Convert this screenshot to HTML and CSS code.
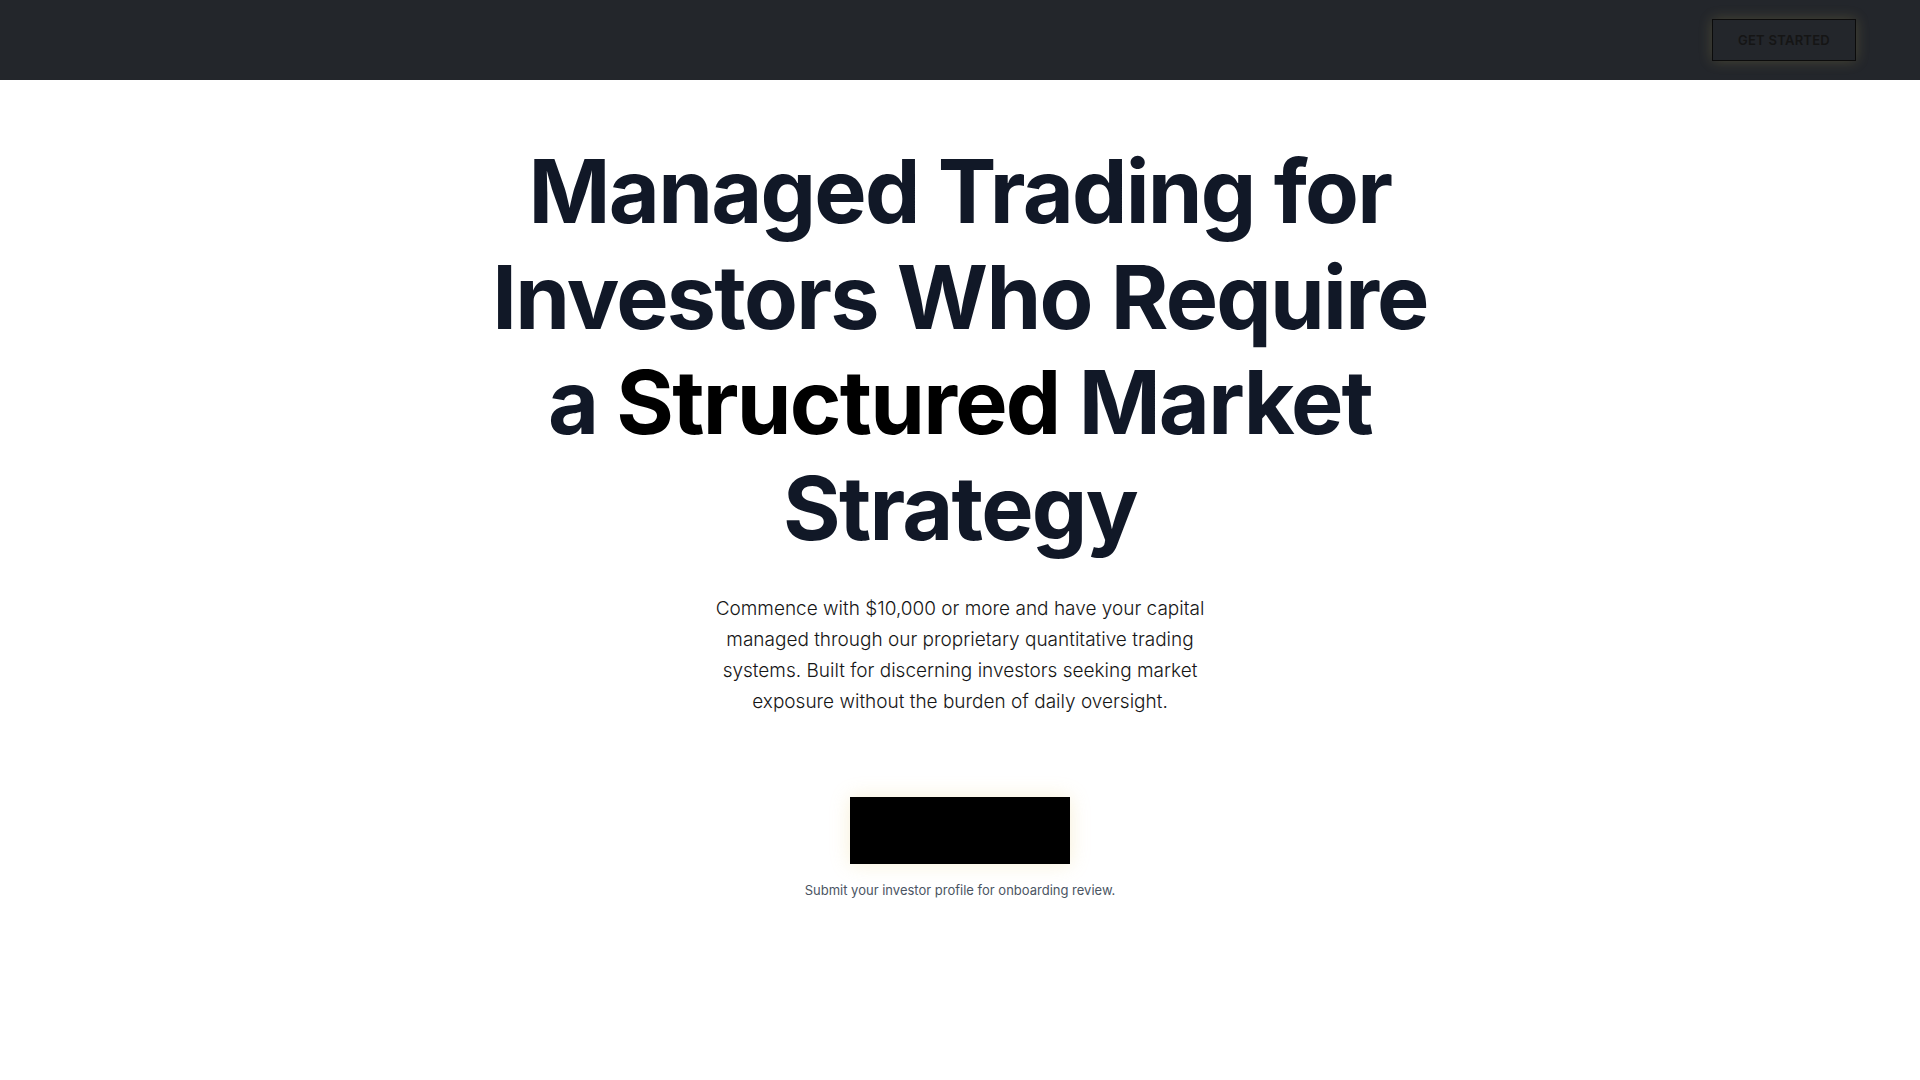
FILE: index.html
```html
<!DOCTYPE html>
<html lang="en">
<head>
<meta charset="utf-8">
<title>Managed Trading</title>
<link rel="stylesheet" href="styles.css">
</head>
<body>
<header class="topbar">
  <div class="topbar-spacer"></div>
  <a class="btn-outline" href="#">GET STARTED</a>
</header>
<main class="hero">
  <h1 class="hero-title">Managed Trading for Investors Who Require a <span class="accent">Structured</span> Market Strategy</h1>
  <p class="hero-lead">Commence with $10,000 or more and have your capital managed through our proprietary quantitative trading systems. Built for discerning investors seeking market exposure without the burden of daily oversight.</p>
  <a class="btn-primary" href="#" aria-label="Apply"></a>
  <p class="hero-note">Submit your investor profile for onboarding review.</p>
</main>
</body>
</html>
```

FILE: styles.css
```css
* { box-sizing: border-box; }
html, body { margin: 0; padding: 0; }
body {
  font-family: Inter, "Noto Sans", "Liberation Sans", sans-serif;
  background: #ffffff;
  color: #111827;
}
.topbar {
  height: 80px;
  background: #23262b;
  display: flex;
  align-items: center;
  justify-content: space-between;
  padding: 0 64px;
}
.btn-outline {
  display: flex;
  align-items: center;
  justify-content: center;
  width: 144px;
  height: 42px;
  margin-top: -1px;
  border: 1px solid #0b0b0b;
  color: #151515;
  font-size: 13px;
  font-weight: 600;
  letter-spacing: 0.02em;
  text-decoration: none;
  box-shadow: 0 0 14px rgba(214, 190, 90, 0.22);
}
.hero {
  display: flex;
  flex-direction: column;
  align-items: center;
  text-align: center;
  padding-top: 59px;
}
.hero-title {
  margin: 0;
  max-width: 960px;
  font-size: 88px;
  line-height: 105.6px;
  font-weight: 700;
  letter-spacing: -0.02em;
  color: #111827;
}
.accent { color: #000000; }
.hero-lead {
  margin: 32px 0 0;
  max-width: 512px;
  font-size: 19px;
  line-height: 31px;
  font-weight: 300;
  color: #161616;
}
.btn-primary {
  display: block;
  margin-top: 80px;
  width: 220px;
  height: 67px;
  background: #000000;
  box-shadow: 0 0 18px rgba(230, 200, 110, 0.28);
}
.hero-note {
  margin: 16px 0 0;
  font-size: 13px;
  line-height: 20px;
  color: #4b5563;
}
```
